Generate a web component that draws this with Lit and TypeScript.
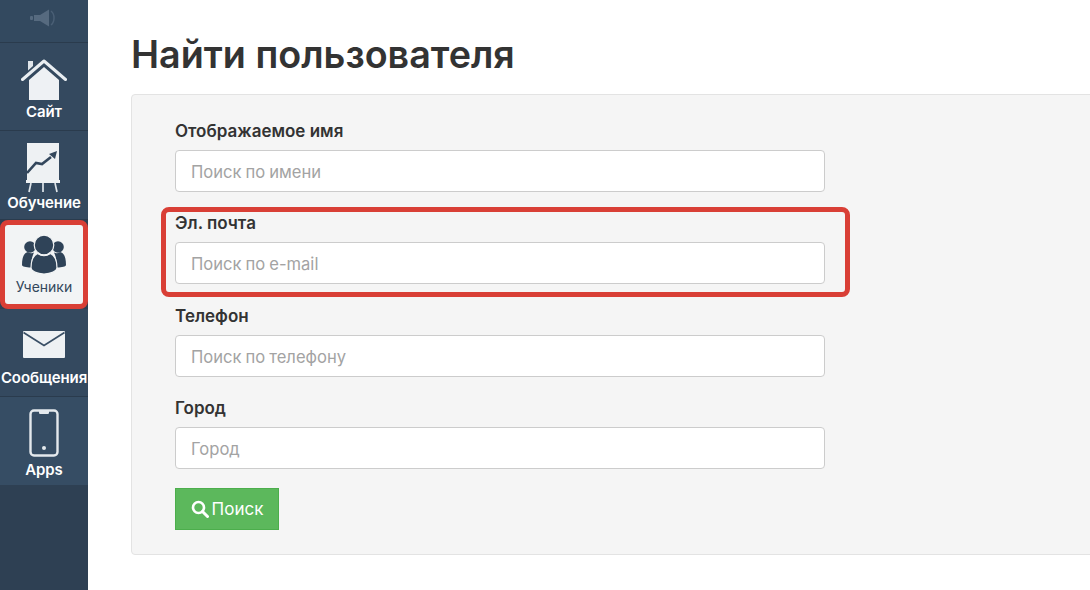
import { LitElement, html, css, svg } from "lit";
import { customElement } from "lit/decorators.js";

const icons = {
  speaker: svg`<svg width="28" height="18" viewBox="0 0 28 18"><rect x="0" y="7" width="3" height="4" rx="1" fill="#566a7f"/><path d="M4 6h6l9-5.5v17L10 12H4z" fill="#566a7f"/><path d="M21 2c4 3 4 11 0 14" fill="none" stroke="#4a5f75" stroke-width="1.5"/></svg>`,
  home: svg`<svg width="46" height="44" viewBox="0 0 46 44"><path d="M7 3h5v5l-5 4.500z" fill="#dfe5ea"/><path d="M1.500 21.500 23 3l21.500 18.500" fill="none" stroke="#e9eef2" stroke-width="3" stroke-linecap="round" stroke-linejoin="round"/><path d="M8 22 23 9l15 13v20H8z" fill="#eef1f4"/></svg>`,
  chart: svg`<svg width="36" height="50" viewBox="0 0 36 50"><rect x="2" y="0" width="32" height="38" fill="#eef1f3"/><rect x="1" y="37" width="34" height="3" fill="#eef1f3"/><path d="M6 40 4 49M18 40v9M30 40l2 9" stroke="#dfe5ea" stroke-width="1.700" fill="none"/><path d="M2 30 11 20l6 1 9-7" fill="none" stroke="#33475c" stroke-width="2.600"/><path d="M24 11l8-3-2 8z" fill="#33475c"/></svg>`,
  people: svg`<svg width="46" height="40" viewBox="0 0 46 40"><g fill="#2f4358"><circle cx="9" cy="12" r="5.800"/><path d="M1 30c0-8 2-12 6-13 2 1.500 4 1.500 6 .5-2 4-3 9-3 15-5 0-9-1-9-2.500z"/><circle cx="37" cy="12" r="5.800"/><path d="M45 30c0-8-2-12-6-13-2 1.500-4 1.500-6 .5 2 4 3 9 3 15 5 0 9-1 9-2.500z"/><circle cx="23" cy="10" r="9.800" stroke="#f2f4f5" stroke-width="1.200"/><path d="M10 33c0-8 3-13 7-14.500 3 3 9 3 12 0 4 1.500 7 6.500 7 14.500 0 3-6 6-13 6s-13-3-13-6z" stroke="#f2f4f5" stroke-width="1.200"/></g></svg>`,
  mail: svg`<svg width="44" height="27" viewBox="0 0 44 27"><rect x="1" y="0" width="42" height="27" rx="1" fill="#eef1f3"/><path d="M1.500 1.500 22 14.500 42.500 1.500" fill="none" stroke="#3a4f65" stroke-width="1.700"/></svg>`,
  phone: svg`<svg width="30" height="48" viewBox="0 0 30 48"><rect x="1.5" y="1.5" width="27" height="45" rx="3.5" fill="none" stroke="#e4e9ed" stroke-width="2.4"/><path d="M10 2h10v1.5c0 1-.6 1.5-1.5 1.5h-7C10.600 5 10 4.500 10 3.500z" fill="#e4e9ed"/><circle cx="15" cy="39" r="2" fill="#e4e9ed"/></svg>`,
};

const navItems = [
  { label: "Сайт", icon: icons.home, cls: "site" },
  { label: "Обучение", icon: icons.chart, cls: "learn" },
  { label: "Ученики", icon: icons.people, cls: "students active" },
  { label: "Сообщения", icon: icons.mail, cls: "messages" },
  { label: "Apps", icon: icons.phone, cls: "apps" },
];

const fields = [
  { label: "Отображаемое имя", placeholder: "Поиск по имени", marked: false },
  { label: "Эл. почта", placeholder: "Поиск по e-mail", marked: true },
  { label: "Телефон", placeholder: "Поиск по телефону", marked: false },
  { label: "Город", placeholder: "Город", marked: false },
];

@customElement("app-root")
export class AppRoot extends LitElement {
  static styles = css`
    :host {
      display: block;
      width: 1090px;
      height: 590px;
      overflow: hidden;
      background: #fff;
      font-family: Inter, "Noto Sans", sans-serif;
      color: #333;
    }
    * { box-sizing: border-box; }
    .page { display: flex; height: 590px; }
    .side {
      flex: 0 0 88px;
      background: #2e4053;
      display: flex;
      flex-direction: column;
    }
    .top {
      height: 43px;
      background: #33495f;
      border-bottom: 1px solid #2a3b4d;
      display: flex;
      justify-content: center;
      padding-top: 9px;
    }
    .item {
      display: flex;
      flex-direction: column;
      align-items: center;
      background: #34495f;
      color: #fff;
      font-size: 15px;
      font-weight: 600;
      letter-spacing: -0.1px;
      white-space: nowrap;
      border-bottom: 1px solid #2a3b4d;
    }
    .item svg { display: block; }
    .item span { line-height: 18px; }
    .site { height: 88px; padding-top: 15px; }
    .site span { margin-top: 1px; }
    .learn { height: 89px; padding-top: 12px; }
    .learn svg { margin-left: -2px; }
    .learn span { margin-top: 1px; }
    .students {
      height: 89px;
      padding-top: 10px;
      background: #f2f4f5;
      color: #33475c;
      font-size: 14px;
      font-weight: 400;
      letter-spacing: 0;
      border: 5px solid #d93f36;
      border-radius: 8px;
    }
    .students span { margin-top: 3px; }
    .messages { height: 88px; padding-top: 22px; }
    .messages span { margin-top: 11px; }
    .apps { height: 88px; padding-top: 12px; background: #364d64; border-bottom: 0; }
    .apps span { margin-top: 4px; }
    .main { flex: 1; padding: 29px 0 0 43px; min-width: 0; }
    h1 {
      margin: 0 0 15px;
      font-size: 37.7px;
      line-height: 50px;
      font-weight: 600;
      color: #333;
      white-space: nowrap;
    }
    .panel {
      width: 1000px;
      height: 461px;
      background: #f5f5f5;
      border: 1px solid #e3e3e3;
      border-radius: 4px;
      padding: 24px 0 24px 43px;
      display: flex;
      flex-direction: column;
      gap: 19.4px;
    }
    .field { position: relative; width: 650px; display: flex; flex-direction: column; gap: 7px; }
    label { font-size: 17px; line-height: 24px; font-weight: 600; color: #333; }
    input {
      width: 100%;
      height: 42px;
      padding: 2px 15px 0;
      font: 400 16.6px Inter, "Noto Sans", sans-serif;
      word-spacing: -0.7px;
      color: #333;
      background: #fff;
      border: 1px solid #ccc;
      border-radius: 4px;
      outline: 0;
    }
    input::placeholder { color: #a3a3a3; opacity: 1; }
    .mark {
      position: absolute;
      inset: -4.4px -25px -12.5px -14px;
      border: 5px solid #d93f36;
      border-radius: 8px;
      pointer-events: none;
    }
    button {
      width: 104px;
      height: 42px;
      margin-top: -1px;
      display: flex;
      align-items: center;
      justify-content: center;
      gap: 3px;
      background: #5cb85c;
      border: 1px solid #4cae4c;
      color: #fff;
      font: 400 17px Inter, "Noto Sans", sans-serif;
      padding: 0;
    }
  `;

  render() {
    return html`
      <div class="page">
        <nav class="side">
          <div class="top">${icons.speaker}</div>
          ${navItems.map(
            (n) => html`<div class="item ${n.cls}">${n.icon}<span>${n.label}</span></div>`
          )}
        </nav>
        <main class="main">
          <h1>Найти пользователя</h1>
          <form class="panel">
            ${fields.map(
              (f) => html`<div class="field">
                <label>${f.label}</label>
                <input type="text" placeholder=${f.placeholder} />
                ${f.marked ? html`<div class="mark"></div>` : ""}
              </div>`
            )}
            <button type="button">
              <svg width="18" height="18" viewBox="0 0 18 18"><circle cx="7.500" cy="7.500" r="5.500" fill="none" stroke="#fff" stroke-width="2.600"/><path d="M11.500 11.500 16.500 16.500" stroke="#fff" stroke-width="3" stroke-linecap="round"/></svg>
              Поиск
            </button>
          </form>
        </main>
      </div>
    `;
  }
}
